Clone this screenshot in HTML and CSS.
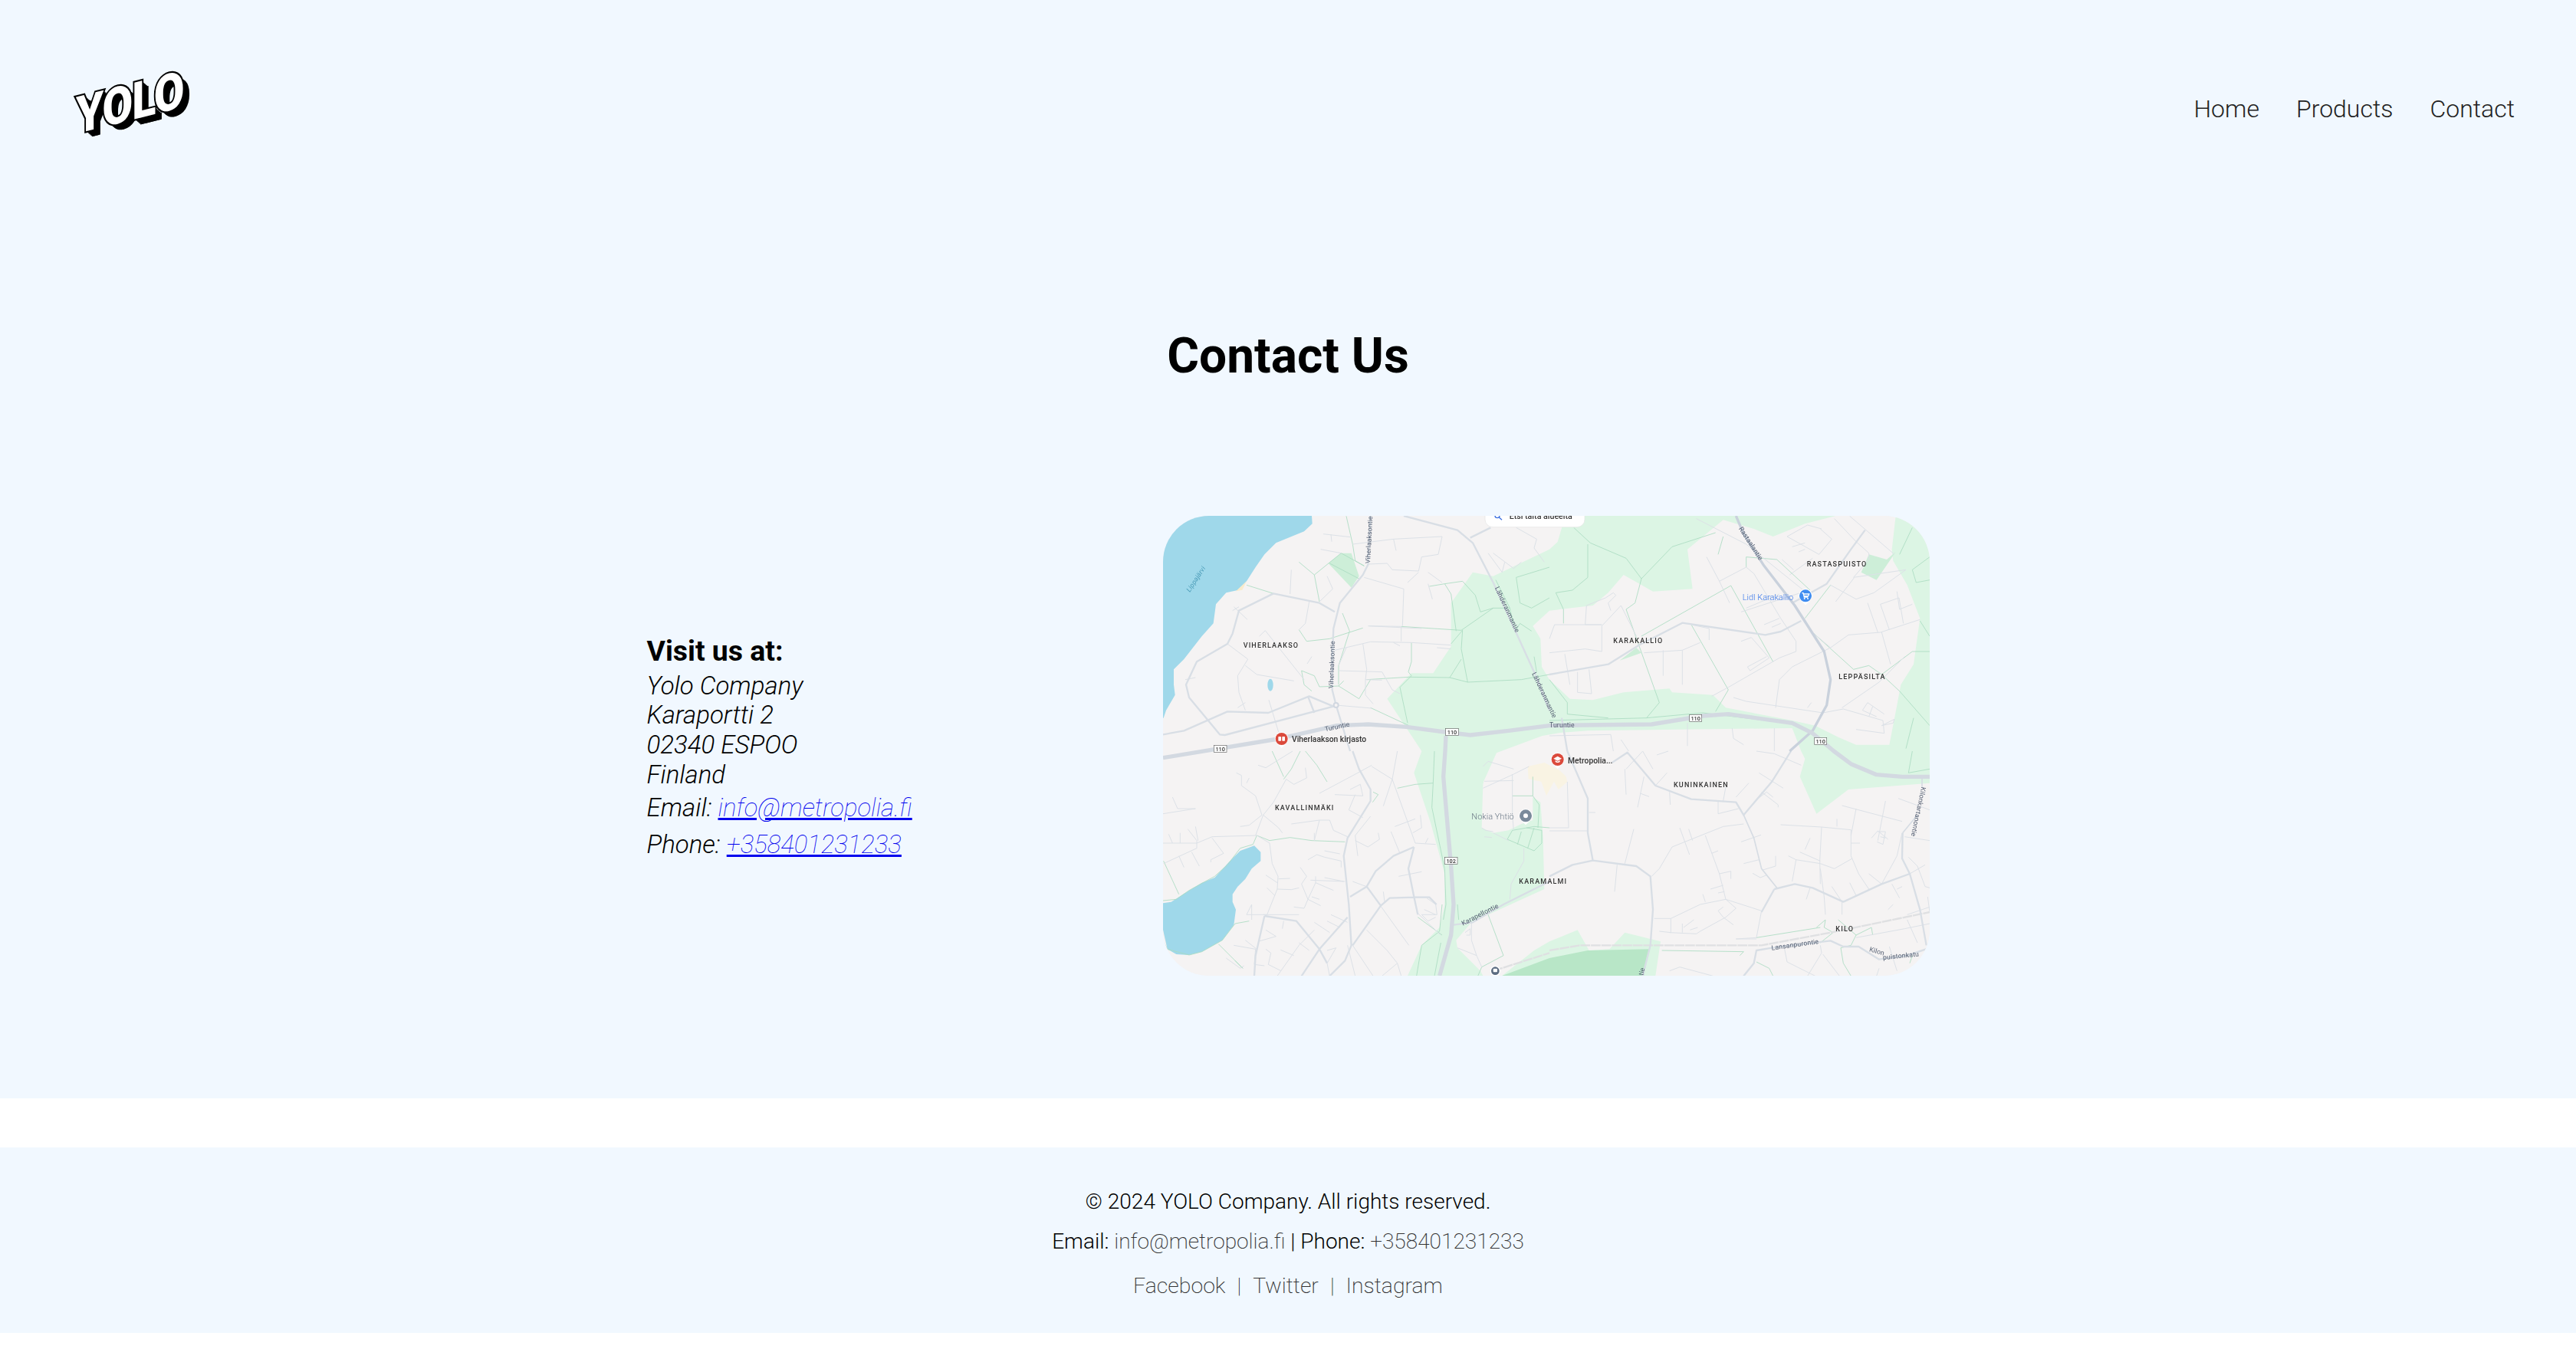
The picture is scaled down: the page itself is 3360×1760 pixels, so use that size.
FILE: index.html
```html
<!DOCTYPE html>
<html lang="en">
<head>
    <meta charset="UTF-8">
    <meta name="viewport" content="width=device-width, initial-scale=1.0">
    <title>Contact Us</title>
    <link rel="stylesheet" href="styles.css">
</head>
<body>
    <div class="page">
        <header class="site-header">
            <a href="#" class="logo"><span class="logo-text">YOLO</span></a>
            <nav class="site-nav">
                <a href="#">Home</a>
                <a href="#">Products</a>
                <a href="#">Contact</a>
            </nav>
        </header>

        <h1 class="page-title">Contact Us</h1>

        <section class="contact">
            <div class="address">
                <h3>Visit us at:</h3>
                <address>Yolo Company<br>Karaportti 2<br>02340 ESPOO<br>Finland</address>
                <p>Email: <a href="#">info@metropolia.fi</a></p>
                <p>Phone: <a href="#">+358401231233</a></p>
            </div>

            <div class="map">
                <svg viewBox="0 0 3000 1800" width="1000" height="600">
                    <!-- land and parks -->
                    <rect class="park" width="3000" height="1800"/>
                    <polygon class="land" points="0,0 1574,0 1544,102 1512,131 1292,236 1212,221 1127,341 1127,511 1057,616 972,616 877,716 1012,921 982,1006 1047,1201 1102,1401 1102,1521 1082,1611 1012,1681 957,1800 0,1800"/>
                    <polygon class="land" points="1662,841 1554,849 1484,861 1305,928 1255,1039 1252,1051 1247,1221 1292,1241 1352,1231 1402,1206 1447,1191 1447,1101 1477,1121 1487,1261 1492,1461 1207,1591 1147,1661 1152,1691 1242,1781 1252,1800 1327,1800 1452,1701 1512,1666 1622,1621 1667,1701 1747,1696 1807,1631 1947,1666 1927,1800 3000,1800 3000,1046 2682,1071 2557,1166 2492,1021 2512,951 2497,921 2462,831"/>
                    <polygon class="land" points="2052,131 2192,16 2312,51 2387,81 2512,31 2632,0 2867,0 2852,131 2857,176 2912,271 2962,401 2937,581 2887,661 2872,741 2842,896 2712,896 2642,866 2552,821 2462,801 2202,751 2152,701 1992,691 1982,676 1802,691 1682,721 1592,716 1512,641 1482,591 1477,481 1447,431 1512,371 1682,351 1742,301 1802,231 1917,296 2072,286"/>
                    <polygon class="park-dark" points="647,186 697,146 737,146 767,236 737,281"/>
                    <polygon class="park-dark" points="2732,221 2762,151 2832,171 2867,141 2792,251"/>
                    <polygon class="park-dark" points="1787,566 1852,516 1872,536"/>
                    <polygon class="park-deep" points="1327,1800 1512,1731 1662,1701 1902,1696 1882,1800"/>

                    <!-- water -->
                    <polygon class="water" points="582,0 584,31 552,61 442,106 397,151 362,201 327,256 292,291 247,301 207,346 197,421 152,471 82,561 42,601 42,661 47,701 12,761 2,791 0,791 0,0"/>
                    <polygon class="sand" points="327,256 310,290 285,295"/>
                    <ellipse class="water" cx="420" cy="662" rx="11" ry="24"/>
                    <polygon class="water" transform="translate(-48,921)" points="405,370 430,395 430,430 395,460 370,500 340,530 320,560 320,590 333,620 325,680 280,740 200,785 150,798 100,795 65,775 48,700 48,595 80,590 150,545 200,515 250,495 310,430 350,390"/>
                    <polygon class="building" points="1427,981 1492,966 1552,996 1577,1021 1582,1041 1547,1071 1530,1040 1500,1095 1480,1040 1430,1030"/>

                    <!-- footpaths and small streets, top left -->
                    <g transform="translate(-48,-39)">
                        <path class="path" d="M375 310 L480 343 M640 270 L745 185 L835 235 M700 225 L815 285 M765 40 L790 150 L800 215 L835 235 M580 220 L640 270 L660 375 M580 485 L610 530 L700 520 L830 478 M590 645 L640 665 L660 708 L735 705 L815 755 L860 680 M590 645 L600 700 L630 725 M735 705 L755 685 M750 420 L778 490 L735 625 L735 700 M1090 315 L1150 305 L1220 295 L1270 350 L1290 415 L1340 400 L1405 400 L1425 490 L1445 460 L1490 490 M1150 305 L1175 345 L1195 490 M980 472 L1215 487 L1340 400 M1175 540 L1220 487 L1215 560 L1240 690 L1450 680 L1560 660 M845 680 L1010 670 L1170 672 L1240 690 M1020 535 L1020 610 L1008 650 L1020 665 L975 710 L1005 850 M1170 672 L1215 600 M860 790 L1010 860 M1430 280 L1560 240 M1430 280 L1445 380 L1490 400 L1560 360 M1350 290 L1405 400 M1500 590 L1510 650"/>
                        <path class="minor" d="M790 150 L950 130 L1140 120 L1125 190 L1060 200 L1048 255 L945 250 L925 225 L850 228 M675 110 L780 122 M705 112 L708 140 M665 170 L745 185 M950 130 L960 175 M835 280 L990 325 L985 470 M1048 260 L1005 300 M1085 260 L1140 300 M1085 305 L1102 365 M550 250 L545 345 M690 275 L712 325 L660 375 M620 375 L605 460 L580 485 M855 470 L980 472 M720 565 L860 532 L1020 535 L1175 545 M980 472 L980 530 M950 535 L975 548 M325 395 L378 445 M345 395 L320 410 M425 510 L448 488 L600 680 M300 540 L380 600 L340 665 L345 730 L370 800 M340 790 L370 770 M370 625 L415 660 L560 685 M135 680 L175 672 M462 760 L500 885 M735 645 L905 650 L945 720 L975 735 M840 680 L905 682 M840 680 L840 740 L870 775 M725 780 L865 792 M830 540 L845 640 L840 680 M765 555 L735 625 M630 590 L612 618 M1320 185 L1375 260 L1385 220 M1340 185 L1420 245 L1450 220 M1540 220 L1500 165 L1510 130 L1430 85 M1120 555 L1175 560 M850 470 L1060 480"/>
                    </g>

                    <!-- top right -->
                    <g transform="translate(1512,-39)">
                        <path class="path" d="M95 85 L160 145 L300 205 L360 285 M150 150 L150 280 L90 330 L25 340 L55 405 L55 460 M360 285 L480 160 L650 105 M660 190 L680 120 M360 285 L335 380 L300 405 L430 770 L380 830 M360 510 L710 312 L875 610 M555 465 L700 720 L650 805 M770 240 L770 200 L890 210 L1020 330 M1100 310 L1000 440 M1035 500 L1190 640 L1250 625 L1300 660 L1420 570 L1488 570 M1300 660 L1370 725 L1488 860 M1420 250 L1488 200 M1420 250 L1435 300 L1488 290 M1370 190 L1420 85 M1450 450 L1488 510 M0 680 L70 770 L70 815 L230 830 M1425 830 L1395 950 M0 840 L380 830 L600 810 L930 850"/>
                        <path class="minor" d="M575 50 L770 150 L1000 335 M615 200 L665 295 L705 380 M665 295 L770 240 L800 265 L905 440 L965 530 L965 570 L900 595 L700 710 L635 745 M770 400 L900 345 M750 415 L1000 335 M840 465 L900 440 M870 475 L905 460 M930 120 L1010 75 L1065 90 M930 120 L1055 190 L1105 130 L1060 90 M950 160 L1000 145 M975 180 L1000 170 M910 210 L955 250 M940 270 L1030 205 M1115 50 L1200 140 L1250 185 L1250 210 L1190 280 L1395 250 M1120 375 L1192 282 M1175 40 L1350 190 M1100 310 L1200 365 L1270 340 L1395 250 M1245 380 L1285 495 M1295 385 L1330 485 M1295 385 L1368 360 L1385 460 M1370 405 L1420 385 M1360 335 L1370 405 M1035 500 L1100 555 L1170 505 L1295 495 L1450 445 M1100 555 L950 630 L900 680 L885 790 M1300 495 L1335 620 M720 750 L770 765 L1070 810 L1150 795 L1305 840 L1310 890 L1200 875 M1145 790 L1290 690 L1390 590 M1225 800 L1280 825 M1245 770 L1310 815 M1265 785 L1250 825 M1245 770 L1225 800 M1300 860 L1350 835 L1345 850 L1300 860 M750 530 L790 515 L860 595 L785 645 L775 630 L850 590 M0 575 L140 560 L205 570 L205 470 L280 390 L340 510 M140 465 L205 465 L20 465 L0 520 M140 465 L145 390 L220 360 L250 340 L260 350 L230 380 L240 410 M60 580 L80 700 M110 650 L110 730 L165 735 L155 640 M445 565 L445 665 M520 565 L520 700 M370 575 L520 565 L590 535 M625 480 L625 525 M555 465 L625 480 M0 900 L240 895 L250 960 M280 915 L310 960 M715 870 L720 910 L760 935 M880 870 L880 960 M540 850 L540 940 M1025 770 L1010 790"/>
                    </g>

                    <!-- bottom left -->
                    <g transform="translate(-48,921)">
                        <path class="path" d="M475 0 L520 100 M585 0 L550 70 L520 110 M605 0 L650 55 L690 120 M415 330 L465 350 L545 338 L630 350 L760 355 M415 330 L400 365 L350 380 L300 445 L250 490 L150 545 L100 580 L48 585 M868 200 L890 170 L870 160 M48 740 L65 775 L150 798 L200 785 L280 740 L330 675 L385 665 M265 755 L360 850 L330 820 M50 430 L110 560 M1035 130 L1105 125 L1100 220 L1150 460 L1155 600 L1145 660 M965 145 L1035 130 M1110 0 L1105 125 M1045 650 L1140 720 M1060 760 L1130 705 L1140 600 M1060 760 L1040 880 M1110 880 L1135 750 M1200 600 L1205 660 M1415 175 L1495 175 L1520 210 L1515 300 M1395 345 L1415 310 L1500 295 L1560 300 M1395 345 L1500 390 L1530 360 L1530 310 L1470 300 M1435 365 L1450 315 M1475 380 L1500 300 M1495 175 L1495 100 M1320 640 L1380 800 L1295 845 L1280 880"/>
                        <path class="minor" d="M48 360 L180 360 L240 335 L415 330 M85 180 L105 225 L175 225 L48 245 M115 320 L115 360 M70 325 L85 360 M145 305 L180 350 L180 380 L50 440 M175 295 L185 350 M110 410 L130 455 M160 395 L190 450 M240 340 L285 400 L235 425 L235 435 M335 85 L355 95 L355 135 L410 175 L435 250 L385 290 L350 295 M375 125 L385 105 M440 250 L410 330 M440 250 L480 200 L530 110 L560 130 L610 105 L605 65 M420 55 L450 65 L555 0 M440 250 L500 300 L515 320 M415 330 L465 360 L475 440 L498 490 L495 540 L455 640 L375 640 L395 600 L395 660 M450 485 L495 515 M455 535 L485 565 M500 500 L545 498 M495 540 L550 542 L580 535 M585 455 L610 490 L590 520 L615 580 L645 515 L715 545 M625 505 L760 510 M680 495 L755 510 M645 490 L645 515 M615 425 L650 405 L680 415 L745 430 M680 390 L740 402 M745 430 L745 455 M615 580 L665 605 M630 570 L660 580 M560 610 L600 615 L615 580 M580 640 L440 640 M520 665 L515 695 M640 670 L700 710 M690 665 L740 690 M705 640 L770 670 M640 700 L580 760 L495 880 M580 750 L620 780 M508 778 L560 800 M450 775 L470 790 L460 835 L510 860 M370 740 L415 775 M325 760 L410 775 L405 835 L445 840 M450 700 L490 725 L420 745 M295 810 L350 850 L365 840 M660 165 L810 85 L865 55 M720 170 L830 175 L820 130 L780 150 M800 170 L775 230 L830 260 M860 255 L800 330 L810 410 M800 350 L850 375 L895 345 L890 320 M640 320 L640 350 L660 270 L550 285 M660 270 L700 270 L715 310 L770 335 M910 550 L915 590 M790 510 L830 525 L845 530 M845 530 L1010 760 M845 700 L925 780 L965 830 L980 880 M790 760 L870 880 M965 830 L905 880 M970 490 L1060 472 M1035 360 L1115 365 M1075 360 L1085 340 M945 110 L1035 360 M945 110 L910 215 M865 60 L945 110 L965 0 M955 295 L1035 265 M1055 250 L1060 300 L1025 320 M940 315 L975 400 M1080 575 L1115 600 L1120 640 L1060 640 M1070 620 L1115 640 M1060 640 L1085 665 L1115 650 M1040 630 L1135 720 M1300 60 L1320 40 L1420 70 M1300 145 L1420 90 L1480 60 M1305 118 L1420 115 M1415 90 L1415 250 L1420 310 M1295 300 L1310 310 L1340 315 M1305 335 L1335 338 M1340 320 L1400 350 M1460 380 L1460 430 L1410 520 L1405 580 M1200 770 L1275 800 L1295 845 M1255 670 L1255 740 L1275 800 M1230 710 L1250 695 L1250 720 L1235 720 M800 880 L770 760 M690 780 L725 770 L690 830 L700 880"/>
                        <path class="rail" d="M1340 860 L1560 790"/>
                    </g>

                    <!-- bottom right -->
                    <g transform="translate(1512,921)">
                        <path class="path" d="M1045 690 L1080 660 L1075 690 L1110 710 L1060 750 M1130 660 L1165 690 L1200 720 L1180 760 L1140 770 L1150 830 L1180 880 M1200 720 L1260 690 L1265 720 M1060 690 L810 730 M440 780 L760 785 M760 785 L745 800 M1420 800 L1410 830 M1405 85 L1420 0 M1405 85 L1488 70 M810 825 L860 850 L875 880"/>
                        <path class="minor" d="M265 445 L255 550 M70 120 L75 300 L0 300 M0 312 L150 312 M155 240 L180 240 M330 305 L295 440 M370 100 L345 220 M355 165 L390 178 M405 70 L365 0 M295 70 L300 170 M300 70 L365 0 M415 135 L460 85 M470 160 L473 210 M660 195 L660 245 L740 225 M680 195 L690 140 M730 180 L780 125 M830 160 L895 210 L895 220 M820 85 L915 145 M810 190 L850 160 L875 180 M420 15 L465 0 M810 0 L880 10 L985 55 M760 285 L680 295 L480 375 L430 460 L400 490 M610 330 L665 480 L690 580 L830 625 M510 300 L548 405 M545 305 L560 350 M635 400 L660 390 M665 480 L710 470 L710 500 M630 540 L680 525 M660 555 L685 550 M600 560 L610 590 M475 655 L410 655 M475 655 L475 710 L430 705 M475 655 L590 600 L690 580 L730 615 L690 650 L590 705 L575 715 L470 710 M520 675 L520 710 M525 690 L565 660 M550 700 L580 690 M680 610 L660 625 L680 650 L720 680 M830 625 L810 730 L730 735 M750 355 L828 328 M760 440 L820 425 M835 465 L885 450 L885 410 M795 478 L825 495 L850 485 M905 288 L1065 297 L1180 308 L1180 410 L1210 480 L1250 540 M1065 297 L1058 430 L1060 520 M1125 265 L1125 295 M1145 213 L1380 275 M1200 225 L1180 330 M1315 195 L1285 350 M1180 360 L1215 360 M1285 315 L1315 315 L1305 365 L1282 355 M1295 335 L1315 340 M1260 340 L1285 312 L1325 345 M1365 185 L1488 230 M1390 335 L1488 350 M1380 320 L1360 410 L1300 520 L1250 480 M1405 415 L1440 450 L1470 530 L1488 535 M1410 480 L1470 445 M1020 340 L1000 385 M980 395 L1060 430 M935 410 L965 425 L1060 440 L1115 460 L1185 420 M965 425 L950 510 M1020 535 L1005 580 M1105 530 L1145 590 L1145 640 M1060 460 L1075 570 L1080 640 M1175 515 L1200 565 M1340 520 L1370 575 M1360 540 L1380 530 M1325 620 L1345 600 M1400 660 L1440 750 M1200 730 L1390 695 L1488 675 M1060 760 L1065 790 L1010 880 M920 775 L930 825 L1040 880 M1070 795 L1135 880 M730 735 L810 735 M1330 765 L1360 860 M1480 570 L1488 630 M470 860 L510 845 L640 880 M1290 850 L1280 880 M1400 640 L1488 610"/>
                        <path class="rail" d="M0 780 L120 760 L830 760 L1100 710 L1488 630"/>
                        <path class="road-mid" d="M880 540 L960 520 L1030 535 L1150 590 L1300 520 L1410 480 M880 540 L830 630 M1382 320 L1380 420 L1410 480 L1450 620 L1475 760 M245 45 L305 5 L360 70 L415 135 L555 188 L730 200 L760 250 L870 120 L945 0 M760 880 L800 830 L810 780 L870 770 L1100 742 L1150 765 L1210 765 L1290 815 L1400 800 L1488 770"/>
                        <path class="road-thin" d="M760 250 L800 340 L830 460 L890 535 M1458 100 L1458 140 M1440 250 L1382 320"/>
                    </g>

                    <!-- main roads -->
                    <g transform="translate(-48,-39)">
                        <path class="road-mid" d="M48 895 L130 880 L300 805 L460 810 L620 745 L715 785 L290 897 L270 895 L150 750 L138 700 L180 610 L300 540 L320 500 L345 410 L480 343 L660 380 L720 415 M615 745 L640 810"/>
                        <path class="road-mid" d="M860 39 L850 230 L830 270 L740 380 L715 480 L710 600 L710 720 L725 780 L780 960"/>
                        <path class="road-mid" d="M990 39 L1200 95 L1260 145 L1340 300 L1500 650 L1560 800 M1250 125 L1330 85"/>
                    </g>
                    <g transform="translate(1512,-39)">
                        <path class="road-mid" d="M48 830 L70 960 M0 660 L230 620 L350 545 L520 458 L845 505 L905 492 L985 450 M1235 95 L1180 170 L1085 305 L950 380"/>
                        <path class="road-big" d="M730 39 L760 110 L840 235 L960 390 L1075 570 L1100 680 L1085 780 L1030 880 M1030 880 L940 960"/>
                    </g>
                    <g transform="translate(-48,921)">
                        <path class="road-mid" d="M790 0 L815 70 L860 150 L860 195 L770 340 L755 410 L775 600 L785 760 L760 820 L700 880 M1030 375 L950 410 L880 470 L845 530 L780 570 M845 530 L900 605 M900 605 L935 575 L1030 572 L1090 572 L1118 600 M1030 375 L1008 460 L1030 570 L1045 640 M900 605 L790 760 M445 645 L570 665 L660 775 L690 830 M770 650 L660 775 L590 880 M445 645 L410 800 L405 880 M1185 680 L1260 670 L1380 600 L1560 510"/>
                    </g>
                    <g transform="translate(1512,921)">
                        <path class="road-mid" d="M70 0 L150 185 L150 320 L170 428 M0 490 L90 445 L170 428 L340 450 L395 490 L405 620 L395 760 L365 880"/>
                    </g>
                    <path class="road-major" d="M0 947 L450 873 L680 821 L802 816 L952 826 L1102 846 L1202 858 L1352 841 L1512 821 L1642 819 L1912 816 L2112 783 L2212 776 L2462 811 L2542 851 L2625 921 L2692 971 L2792 1013 L2892 1021 L3000 1021"/>
                    <path class="road-major" d="M1107 861 L1104 921 L1097 1021 L1127 1371 L1137 1521 L1127 1641 L1082 1800"/>
                    <circle class="junction" cx="677" cy="741" r="9"/>

                    <!-- shields -->
                    <g class="shield">
                        <g transform="translate(199,899)"><rect width="50" height="26"/><text x="25" y="21">110</text></g>
                        <g transform="translate(1106,833)"><rect width="50" height="26"/><text x="25" y="21">110</text></g>
                        <g transform="translate(2060,779)"><rect width="48" height="26"/><text x="24" y="21">110</text></g>
                        <g transform="translate(2549,869)"><rect width="48" height="26"/><text x="24" y="21">110</text></g>
                        <g transform="translate(1102,1337)"><rect width="50" height="26"/><text x="25" y="21">102</text></g>
                    </g>

                    <!-- road names -->
                    <g class="road-name">
                        <text transform="translate(810,187) rotate(-87)">Viherlaaksontie</text>
                        <text transform="translate(666,676) rotate(-88)">Viherlaaksontie</text>
                        <text transform="translate(1298,282) rotate(65)">Lähderanmantie</text>
                        <text transform="translate(1443,617) rotate(65)">Lähderanmantie</text>
                        <text transform="translate(635,844) rotate(-12)">Turuntie</text>
                        <text x="1512" y="827">Turuntie</text>
                        <text transform="translate(2252,50) rotate(57)">Rastaalantie</text>
                        <text transform="translate(1174,1604) rotate(-27)">Karapellontie</text>
                        <text transform="translate(2382,1700) rotate(-8)">Lansanpurontie</text>
                        <text transform="translate(2762,1704) rotate(16)">Kilon</text>
                        <text transform="translate(2818,1738) rotate(-6)">puistonkatu</text>
                        <text transform="translate(2968,1060) rotate(102)">Kilonkartanontie</text>
                        <text transform="translate(1878,1800) rotate(-75)">tie</text>
                        <text class="lake-name" transform="translate(105,300) rotate(-57)">Lippajärvi</text>
                    </g>

                    <!-- area names -->
                    <g class="area-name">
                        <text x="314" y="517">VIHERLAAKSO</text>
                        <text x="1762" y="499">KARAKALLIO</text>
                        <text x="2519" y="197">RASTASPUISTO</text>
                        <text x="2644" y="639">LEPPÄSILTA</text>
                        <text x="438" y="1151">KAVALLINMÄKI</text>
                        <text x="1393" y="1439">KARAMALMI</text>
                        <text x="1998" y="1061">KUNINKAINEN</text>
                        <text x="2632" y="1627">KILO</text>
                    </g>

                    <!-- search chip -->
                    <rect class="chip" x="1260" y="-40" width="390" height="84" rx="30"/>
                    <circle class="chip-icon" cx="1308" cy="-1" r="9"/>
                    <path class="chip-icon" d="M1315 6 L1326 16"/>
                    <text class="chip-text" x="1355" y="13">Etsi tältä alueelta</text>

                    <!-- places -->
                    <g transform="translate(464,873)">
                        <path class="pin-base" d="M-27 0 A27 27 0 1 1 27 0 Q25 14 0 36 Q-25 14 -27 0 Z"/>
                        <circle class="pin-red" r="24"/>
                        <rect class="pin-mark" x="-13" y="-9" width="11" height="17" rx="2"/>
                        <rect class="pin-mark" x="2" y="-9" width="11" height="17" rx="2"/>
                    </g>
                    <text class="place" x="504" y="886">Viherlaakson kirjasto</text>

                    <g transform="translate(1544,954)">
                        <path class="pin-base" d="M-27 0 A27 27 0 1 1 27 0 Q25 14 0 36 Q-25 14 -27 0 Z"/>
                        <circle class="pin-red" r="24"/>
                        <polygon class="pin-mark" points="0,-13 16,-4 0,5 -16,-4"/>
                        <path class="pin-mark" d="M-9 3 L0 8 L9 3 L9 9 Q0 15 -9 9 Z"/>
                    </g>
                    <text class="place" x="1584" y="968">Metropolia...</text>

                    <g transform="translate(2514,313)">
                        <path class="pin-base" d="M-27 0 A27 27 0 1 1 27 0 Q25 14 0 36 Q-25 14 -27 0 Z"/>
                        <circle class="pin-blue" r="24"/>
                        <path class="cart" d="M-14 -11 L-9 -11 L-5 5 L10 5 M-8 -7 L14 -7 L11 1 L-6 1"/>
                        <circle class="pin-mark" cx="-4" cy="11" r="3"/>
                        <circle class="pin-mark" cx="9" cy="11" r="3"/>
                    </g>
                    <text class="place-blue" x="2267" y="329">Lidl Karakallio</text>

                    <g transform="translate(1419,1174)">
                        <path class="pin-base" d="M-27 0 A27 27 0 1 1 27 0 Q25 14 0 36 Q-25 14 -27 0 Z"/>
                        <circle class="pin-grey" r="24"/>
                        <circle class="pin-mark" r="9"/>
                    </g>
                    <text class="place-grey" x="1207" y="1189">Nokia Yhtiö</text>

                    <g transform="translate(1300,1781)">
                        <circle class="pin-base" r="20"/>
                        <circle class="pin-slate" r="16"/>
                        <rect class="pin-mark" x="-8" y="-9" width="16" height="14" rx="3"/>
                    </g>
                </svg>
            </div>
        </section>
    </div>

    <footer class="site-footer">
        <p>&copy; 2024 YOLO Company. All rights reserved.</p>
        <p>Email: <a href="#">info@metropolia.fi</a> | Phone: <a href="#">+358401231233</a></p>
        <p class="social">
            <a href="#">Facebook</a>
            <span>|</span>
            <a href="#">Twitter</a>
            <span>|</span>
            <a href="#">Instagram</a>
        </p>
    </footer>
</body>
</html>
```

FILE: styles.css
```css
body {
    font-family: Roboto, Arial, sans-serif;
    font-weight: 300;
    font-size: 32px;
    background-color: #fff;
    color: #000;
    margin: 0;
}

.page {
    background-color: #f1f8ff;
    padding-bottom: 160px;
}

.site-header {
    display: flex;
    justify-content: space-between;
    align-items: center;
    height: 270px;
    padding: 0 80px 0 96px;
    box-sizing: border-box;
}

.logo {
    display: block;
    width: 150px;
    height: 85px;
    text-decoration: none;
}

.logo-text {
    display: block;
    font-family: Roboto, Arial, sans-serif;
    font-weight: 900;
    font-size: 60px;
    line-height: 85px;
    letter-spacing: -1px;
    color: #fff;
    -webkit-text-stroke: 4px #000;
    paint-order: stroke fill;
    text-shadow: 1px 1px 0 #000, 2px 2px 0 #000, 3px 3px 0 #000, 4px 4px 0 #000, 5px 5px 0 #000, 6px 6px 0 #000, 7px 7px 0 #000, 8px 8px 0 #000, 9px 8px 0 #000;
    transform: translate(3px, 16px) skewY(-14deg) scale(0.96, 1.12);
    transform-origin: 0 50%;
}

.site-nav {
    display: flex;
    gap: 48px;
    padding-top: 14px;
}

.site-nav a {
    color: #222;
    text-decoration: none;
}

.page-title {
    margin: 157px 0 171px;
    text-align: center;
    font-size: 64px;
    font-weight: 700;
    line-height: 75px;
}

.contact {
    display: flex;
    justify-content: center;
    align-items: center;
}

.address {
    width: 673px;
    padding-top: 7px;
    font-style: italic;
    font-size: 33px;
    font-weight: 300;
}

.address h3 {
    margin: 0 0 5px;
    font-size: 37.4px;
    font-style: normal;
    font-weight: 700;
}

.address address {
    line-height: 38.6px;
}

.address p {
    margin: 0;
    line-height: 48px;
}

.address a {
    color: #00e;
    font-weight: 100;
}

.map {
    width: 1000px;
    height: 600px;
    border-radius: 60px;
    overflow: hidden;
    line-height: 0;
    background-color: #f5f3f3;
}

.map svg {
    display: block;
    font-family: Roboto, Arial, sans-serif;
    filter: blur(0.35px);
}

.map path {
    fill: none;
}

.land { fill: #f5f3f3; }
.park { fill: #dcf5e4; }
.park-dark { fill: #cdeed8; }
.park-deep { fill: #b8e6c7; }
.water { fill: #9fd8ea; }
.sand { fill: #f8ebcc; }
.building { fill: #f9f3e3; }

.map .minor { stroke: #dce1e7; stroke-width: 3; }
.map .path { stroke: #a9dbc0; stroke-width: 2.5; }
.map .rail { stroke: #dfe0e2; stroke-width: 7; stroke-dasharray: 38 3; }
.map .road-thin { stroke: #d6dce3; stroke-width: 5; }
.map .road-mid { stroke: #d8dee5; stroke-width: 7; stroke-linejoin: round; }
.map .road-big { stroke: #c9d1dc; stroke-width: 10; stroke-linejoin: round; }
.map .road-major { stroke: #d3d9e1; stroke-width: 16; stroke-linejoin: round; }

.map .junction {
    fill: #f5f3f3;
    stroke: #d1d7e0;
    stroke-width: 6;
}

.shield rect {
    fill: #fff;
    stroke: #666;
    stroke-width: 2;
}

.shield text {
    font-size: 22px;
    font-weight: 500;
    text-anchor: middle;
    fill: #333;
}

.road-name text {
    font-size: 26px;
    font-weight: 400;
    fill: #4f5a6e;
    letter-spacing: 0.5px;
}

.road-name .lake-name {
    fill: #4a9cb8;
    font-style: italic;
    font-size: 26px;
}

.area-name text {
    font-size: 27px;
    font-weight: 500;
    letter-spacing: 3.5px;
    fill: #333;
}

.chip { fill: #fff; stroke: #e4e4e4; stroke-width: 2; }
.map .chip-icon { fill: none; stroke: #3b6fe0; stroke-width: 4; }

.chip-text {
    font-size: 32px;
    font-weight: 500;
    fill: #333;
}

.map .pin-base { fill: #fff; }
.pin-red { fill: #db4a3c; }
.pin-blue { fill: #3f8cf0; }
.pin-grey { fill: #7a8a9b; }
.pin-slate { fill: #5b6b80; }
.map .pin-mark { fill: #fff; }
.map .cart { stroke: #fff; stroke-width: 4; }

.place {
    font-size: 31px;
    font-weight: 500;
    fill: #333;
}

.place-blue {
    font-size: 33px;
    fill: #3a78ea;
}

.place-grey {
    font-size: 33px;
    fill: #6b7886;
}

.site-footer {
    margin: 64px 0 21px;
    height: 242px;
    box-sizing: border-box;
    padding-top: 52px;
    background-color: #f1f8ff;
    text-align: center;
    font-size: 28px;
    line-height: 38px;
}

.site-footer p {
    margin: 0 0 14px;
}

.site-footer a {
    color: #333;
    text-decoration: none;
    font-weight: 200;
}

.social {
    display: flex;
    justify-content: center;
    gap: 15px;
    padding-top: 6px;
    font-size: 28.4px;
    font-weight: 100;
}
```
